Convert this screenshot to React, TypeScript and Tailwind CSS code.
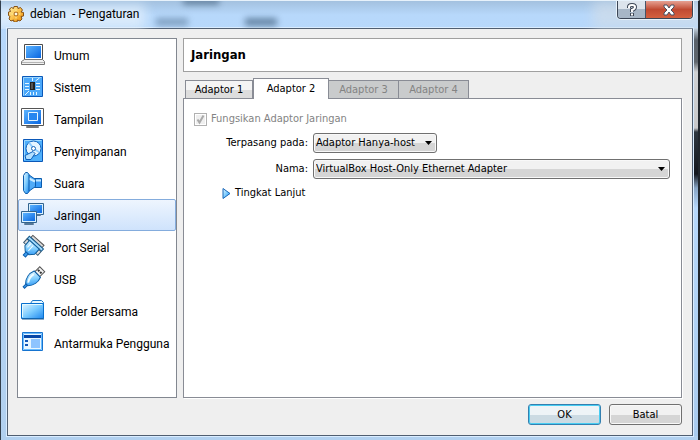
import React from 'react';

const svgProps = { width: 24, height: 24, viewBox: '1 1 24 24', 'aria-hidden': true, className: 'shrink-0 overflow-visible' };

const Gradients: React.FC = () => (
  <svg width="0" height="0" className="absolute" aria-hidden="true">
    <defs>
      <linearGradient id="screen" x1="0" y1="0" x2="1" y2="1">
        <stop offset="0" stopColor="#5cb4ff" />
        <stop offset="1" stopColor="#0a66e0" />
      </linearGradient>
      <linearGradient id="light" x1="0" y1="0" x2="1" y2="1">
        <stop offset="0" stopColor="#e8f8ff" />
        <stop offset="0.5" stopColor="#7cccff" />
        <stop offset="1" stopColor="#1c86ee" />
      </linearGradient>
      <linearGradient id="gold" x1="0" y1="0" x2="1" y2="1">
        <stop offset="0" stopColor="#fff3a8" />
        <stop offset="0.5" stopColor="#fcc04a" />
        <stop offset="1" stopColor="#e88a08" />
      </linearGradient>
    </defs>
  </svg>
);

const GeneralIcon = () => (
  <svg {...svgProps}>
    <path d="M4.500 2.500h18v15h-18z" fill="#fff" stroke="#4c4c4c" />
    <path d="M6 4h15v12H6z" fill="url(#screen)" />
    <path d="M4.500 17.500h18l2 2v3h-23v-3z" fill="#f0f0f0" stroke="#777" />
    <path d="M2 20.500h22" stroke="#b5b5b5" />
  </svg>
);

const SystemIcon = () => (
  <svg {...svgProps}>
    <path d="M2.500 2.500h20v20h-20z" fill="#4ba8fa" stroke="#0b58b8" />
    <path d="M3.500 21.500v-18h18" fill="none" stroke="#9ad6ff" />
    <path d="M10 8h5v8h-5z" fill="#222" />
    <path d="M11 9h2v6h-2z" fill="#555" />
    <path
      d="M5 9.500h4M5 12.500h4M5 15.500h4M16 9.500h4M16 12.500h4M16 15.500h4M12.500 4v3M15.500 7l4-3M10.500 18v3M13.500 18v3M16.500 18v3M9 17l-4 4"
      stroke="#e6f6ff"
      fill="none"
    />
  </svg>
);

const DisplayIcon = () => (
  <svg {...svgProps}>
    <path d="M1.500 2.500h22v17h-22z" fill="#fff" stroke="#555" />
    <path d="M4 4h17v14H4z" fill="url(#screen)" />
    <path d="M8.500 6.500h9v8h-9z" fill="#2586f0" stroke="#e5f5ff" />
    <path d="M6.500 20.500h12v1h-12z" fill="#eee" stroke="#777" />
  </svg>
);

const StorageIcon = () => (
  <svg {...svgProps}>
    <path d="M3.500 1.500h19v22h-19z" fill="#4fb0fb" stroke="#0b58b8" />
    <path d="M4.500 22V2.500h17" stroke="#9fd9ff" fill="none" />
    <circle cx="13.500" cy="10.500" r="7.500" fill="#e5f5ff" stroke="#0b60bd" />
    <path d="M13.500 10.500L9 4.500M13.500 10.500l6 4" stroke="#8dccff" strokeWidth="2" />
    <circle cx="13.500" cy="10.500" r="2" fill="#fff" stroke="#1766b8" />
    <path d="M13 13.500l-8 4 1 4h5l4-6z" fill="#b4e0ff" stroke="#0b60bd" />
  </svg>
);

const AudioIcon = () => (
  <svg {...svgProps}>
    <path d="M14.500 8.500h7v9h-7z" fill="#3b9df8" stroke="#0b5cad" />
    <path d="M15 10.500h6" stroke="#c0e6ff" strokeWidth="2" />
    <path d="M8.500 4.500l7 5v7l-7 5z" fill="#4fabf8" stroke="#0b5cad" />
    <path d="M9 8.500l6 3" stroke="#c8eaff" strokeWidth="2" />
    <path d="M5.500 2.500h2l1.500 2v17l-1.500 2h-2l-2-3v-15z" fill="url(#light)" stroke="#0b5cad" />
  </svg>
);

const NetworkIcon = () => (
  <svg {...svgProps}>
    <path d="M8.500 1.500h15v11h-15z" fill="#d8f0ff" stroke="#32648f" />
    <path d="M10 3h12v8H10z" fill="url(#screen)" />
    <path d="M12.500 12.500h8v1h-8z" fill="#eee" stroke="#547797" />
    <path d="M1.500 9.500h15v11h-15z" fill="#d8f0ff" stroke="#32648f" />
    <path d="M3 11h12v8H3z" fill="url(#screen)" />
    <path d="M4.500 21.500h9v1h-9z" fill="#eee" stroke="#547797" />
  </svg>
);

const SerialIcon = () => (
  <svg {...svgProps}>
    <g transform="rotate(42 12 12)">
      <path d="M5.500 3.500h15v3h-15z" fill="#d8d8d8" stroke="#555" />
      <path d="M3.500 10h3v5h-3zM19.500 10h3v5h-3z" fill="#ddd" stroke="#3c5c74" />
      <path d="M3.500 6.500h19v3h-19z" fill="#a4dcfd" stroke="#175a8c" />
      <path d="M6.500 9.500h13v7l-4 4h-5l-4-4z" fill="url(#light)" stroke="#12619e" />
      <path d="M11.500 20.500h3v4h-3z" fill="#3e9ff0" stroke="#0f5fae" />
      <path d="M9.500 11v5M12.500 11v7" stroke="#effbff" />
    </g>
  </svg>
);

const UsbIcon = () => (
  <svg {...svgProps}>
    <g transform="rotate(45 12 12)">
      <path d="M9.500-1.500h7v7h-7z" fill="#f2f2f2" stroke="#555" />
      <path d="M10.500 1h2v2h-2zM13.500 1h2v2h-2z" fill="#333" />
      <path d="M8.500 5.500h9c2 5 1 11-3 15h-3c-4-4-5-10-3-15z" fill="url(#light)" stroke="#075da7" />
      <path d="M10.500 8c-1 4 0 7 2 10" stroke="#eefbff" strokeWidth="2" fill="none" />
      <path d="M12 20.500h2v4h-2z" fill="#3e9ff0" stroke="#0f5fae" />
    </g>
  </svg>
);

const FolderIcon = () => (
  <svg {...svgProps}>
    <path d="M10.500 5.500l2-3h9l2 2v5h-13z" fill="#e8f8ff" stroke="#1976c8" />
    <path d="M1.500 5.500h22v15h-22z" fill="url(#light)" stroke="#0870ce" />
    <path d="M2.500 19V6.500H22" fill="none" stroke="#e5faff" />
    <path d="M2 21h22" stroke="#185991" />
  </svg>
);

const InterfaceIcon = () => (
  <svg {...svgProps}>
    <path d="M2.500 2.500h20v18h-20z" fill="#fff" stroke="#1674d0" />
    <path d="M3.500 3.500h18v16h-18z" fill="#e7f6ff" stroke="#6bbcff" />
    <path d="M4 5h17v3H4z" fill="#0747a8" />
    <path d="M5 10h3v2H5zM5 14h3v2H5z" fill="#1157b8" />
    <path d="M11 9h9v9h-9z" fill="#8dc4ff" />
  </svg>
);

const GearIcon = () => (
  <svg width="16" height="16" viewBox="0 0 16 16" aria-hidden="true">
    <path
      d="M6 .5h3.500l.5 2L12.500 1.500l2 2.500-1.500 2 2.500.5v3.500l-2.500.5 1 2.500-2 2-2.500-1-.5 2H6l-.5-2-2.500 1-2-2 1-2.500-1.500-1V6l2-.5L1.500 3l2-1.500 2 1z"
      fill="url(#gold)"
      stroke="#865014"
    />
    <circle cx="8" cy="8" r="2" fill="#fffbe8" stroke="#a8600c" />
    <path d="M8 3.500v2M8 10.500v2M3.500 8h2M10.500 8h2" stroke="#fff0a0" />
  </svg>
);

const sections = [
  { name: 'Umum', Icon: GeneralIcon },
  { name: 'Sistem', Icon: SystemIcon },
  { name: 'Tampilan', Icon: DisplayIcon },
  { name: 'Penyimpanan', Icon: StorageIcon },
  { name: 'Suara', Icon: AudioIcon },
  { name: 'Jaringan', Icon: NetworkIcon },
  { name: 'Port Serial', Icon: SerialIcon },
  { name: 'USB', Icon: UsbIcon },
  { name: 'Folder Bersama', Icon: FolderIcon },
  { name: 'Antarmuka Pengguna', Icon: InterfaceIcon },
];

const TitleBar: React.FC = () => (
  <header className="relative flex h-7 shrink-0 items-start overflow-hidden">
    {/* shapes showing through the glass */}
    <div className="absolute -left-4 top-1 h-6 w-40 bg-[#e3f0fc] opacity-80 blur-[6px]" />
    <div className="absolute left-[155px] top-[17px] h-2 w-8 bg-[#5f7f9f] opacity-60 blur-[3px]" />
    <div className="absolute left-[244px] top-[17px] h-2 w-8 bg-[#456482] opacity-70 blur-[3px]" />
    <div className="absolute left-[182px] -top-1 h-2 w-9 bg-[#405e7b] opacity-60 blur-[3px]" />
    <div className="absolute left-[592px] top-0 h-7 w-28 bg-[#d0dce9] opacity-70 blur-[6px]" />
    <div className="relative flex h-[26px] flex-1 items-center gap-[6px] pl-[7px]">
      <GearIcon />
      <h1 className="whitespace-pre font-['Roboto','Open_Sans',sans-serif] text-[12px] leading-4">debian  - Pengaturan</h1>
    </div>
    <div className="relative mr-[5px] flex h-[18px] overflow-hidden rounded-b-[4px] border border-t-0 border-[#3c4656] shadow-[0_0_0_1px_#e9f3fb]">
      <button
        aria-label="Bantuan"
        className="flex w-7 items-center justify-center border-r border-[#465467] bg-linear-to-b from-[#dce4ec] from-50% to-[#a7b6c6] to-50%"
      >
        <svg width="10" height="14" viewBox="0 0 10 14" aria-hidden="true">
          <path d="M2 5V4q0-2 3-2t3 2q0 2-3 3v2M5 10v3" fill="none" stroke="#3d4756" strokeWidth="4" />
          <path d="M2 5V4q0-2 3-2t3 2q0 2-3 3v2M5 10.500v2" fill="none" stroke="#fff" strokeWidth="2" />
        </svg>
      </button>
      <button
        aria-label="Tutup"
        className="flex w-[46px] items-center justify-center bg-linear-to-b from-[#e5a092] from-0% via-[#c04a32] via-50% to-[#d4603f]"
      >
        <svg width="14" height="12" viewBox="0 0 14 12" aria-hidden="true">
          <path d="M2 1h3l2 3 2-3h3v2L9 6l3 3v2H9L7 8l-2 3H2V9l3-3-3-3z" fill="#fff" stroke="#4a5060" />
        </svg>
      </button>
    </div>
  </header>
);

const Sidebar: React.FC = () => (
  <nav className="w-[160px] shrink-0 border border-[#828790] bg-white">
    <ul>
      {sections.map(({ name, Icon }) => (
        <li key={name}>
          <button
            className={`flex h-8 w-full items-center gap-[9px] whitespace-nowrap rounded-[2px] border pl-[2px] text-left font-['Roboto','Open_Sans',sans-serif] text-[12px] leading-4 ${
              name === 'Jaringan'
                ? 'border-[#84acdd] bg-linear-to-b from-[#eef5fe] to-[#cfe3fc]'
                : 'border-transparent'
            }`}
          >
            <Icon />
            <span className="pt-px">{name}</span>
          </button>
        </li>
      ))}
    </ul>
  </nav>
);

const Tabs: React.FC = () => (
  <div role="tablist" className="flex items-end pl-[2px]">
    <button role="tab" className="h-[18px] w-[68px] border border-b-0 border-[#898c95] bg-linear-to-b from-[#f4f4f4] from-50% to-[#dddddd] to-50%">
      Adaptor 1
    </button>
    <button role="tab" aria-selected="true" className="relative -mb-px h-[21px] w-[76px] border border-b-0 border-[#898c95] bg-white">
      Adaptor 2
    </button>
    <button role="tab" disabled className="h-[18px] w-[70px] border border-b-0 border-l-0 border-[#898c95] bg-[#c9cbcc] text-[#838383]">
      Adaptor 3
    </button>
    <button role="tab" disabled className="h-[18px] w-[70px] border border-b-0 border-l-0 border-[#898c95] bg-[#c9cbcc] text-[#838383]">
      Adaptor 4
    </button>
  </div>
);

interface ComboProps {
  id: string;
  value: string;
  className: string;
}

const Combo: React.FC<ComboProps> = ({ id, value, className }) => (
  <div className={`relative ${className}`}>
    <select
      id={id}
      className="block h-5 w-full appearance-none rounded-[3px] border border-[#707070] bg-linear-to-b from-[#f1f1f1] from-50% to-[#d5d5d5] to-50% pl-[2px] pr-4 leading-4 shadow-[inset_0_0_0_1px_#f8f8f8]"
    >
      <option>{value}</option>
    </select>
    <svg className="pointer-events-none absolute right-[5px] top-2" width="7" height="4" viewBox="0 0 7 4" aria-hidden="true">
      <path d="M0 0h7L3.500 4z" fill="#000" />
    </svg>
  </div>
);

const AdapterForm: React.FC = () => (
  <form className="flex-1 border border-[#898c95] bg-white px-[10px] pt-3 shadow-[1px_1px_0_#fff]">
    <label className="flex h-4 items-center gap-1 text-[#838383]">
      <span className="relative flex">
        <input type="checkbox" checked disabled readOnly className="h-[13px] w-[13px] appearance-none border border-[#b1b1b1] bg-[#efefef] shadow-[inset_0_0_0_1px_#fff]" />
        <svg className="pointer-events-none absolute inset-0" width="13" height="13" viewBox="0 0 13 13" aria-hidden="true">
          <path d="M3.500 6.500l2 3 4-7" fill="none" stroke="#aaa" strokeWidth="2" />
        </svg>
      </span>
      Fungsikan Adaptor Jaringan
    </label>
    <div className="mt-[6px] grid grid-cols-[114px_minmax(0,1fr)] items-center gap-x-[5px] gap-y-[6px] pr-px">
      <label htmlFor="attached" className="text-right">Terpasang pada:</label>
      <Combo id="attached" value="Adaptor Hanya-host" className="w-[124px]" />
      <label htmlFor="adapter-name" className="text-right">Nama:</label>
      <Combo id="adapter-name" value="VirtualBox Host-Only Ethernet Adapter" className="w-full" />
    </div>
    <button type="button" className="ml-7 mt-[6px] flex h-4 items-center gap-1">
      <svg width="9" height="11" viewBox="0 0 9 11" aria-hidden="true">
        <path d="M1 .5l7 5-7 5z" fill="url(#light)" stroke="#1766b8" />
      </svg>
      Tingkat Lanjut
    </button>
  </form>
);

const App: React.FC = () => (
  <div className="flex min-h-screen flex-col border-l border-r-2 border-t border-l-[#333f4c] border-r-[#20262d] border-t-[#e7f2fb] bg-[#b7d8fa] bg-linear-to-b from-[#a3c1df] via-[#b7d8fb] via-[14px] to-[#b1d0ef] font-['DejaVu_Sans_Condensed','DejaVu_Sans',sans-serif] text-[11px] leading-[14px] text-black">
    <Gradients />
    <TitleBar />
    <div className="mb-1 -mt-px flex flex-1">
      <div className="ml-[6px] mr-px flex min-w-0 flex-1 flex-col border border-[#505e70] bg-[#efefef] pb-[10px] pl-[9px] pr-[10px] pt-[9px] shadow-[0_0_0_1px_#d9ecff]">
        <div className="flex flex-1 gap-[6px]">
          <Sidebar />
          <main className="flex min-w-0 flex-1 flex-col">
            <h2 className="mb-[6px] flex h-[34px] items-center border border-[#a0a0a0] bg-white pl-[7px] text-[13px] font-bold leading-4">
              Jaringan
            </h2>
            <Tabs />
            <AdapterForm />
          </main>
        </div>
        <footer className="mt-[6px] flex justify-end gap-2">
          <button className="h-[21px] w-[73px] rounded-[3px] border border-[#3480b0] bg-linear-to-b from-[#eef4f7] from-50% to-[#ccdbe3] to-50% shadow-[inset_0_0_0_1px_#48cdf2]">
            OK
          </button>
          <button className="h-[21px] w-[73px] rounded-[3px] border border-[#707070] bg-linear-to-b from-[#f1f1f1] from-50% to-[#d5d5d5] to-50% shadow-[inset_0_0_0_1px_#f8f8f8]">
            Batal
          </button>
        </footer>
      </div>
      <div className="w-1 bg-[linear-gradient(#c5d3e1,#59616a_12px,#5f666d_34px,#cfd2d5_44px,#c8c8ca_100px,#2d3640_104px,#14181f_146px,#87a4c4_160px,#b7d8fb_180px,#a9cbee)]" />
    </div>
  </div>
);

export default App;
